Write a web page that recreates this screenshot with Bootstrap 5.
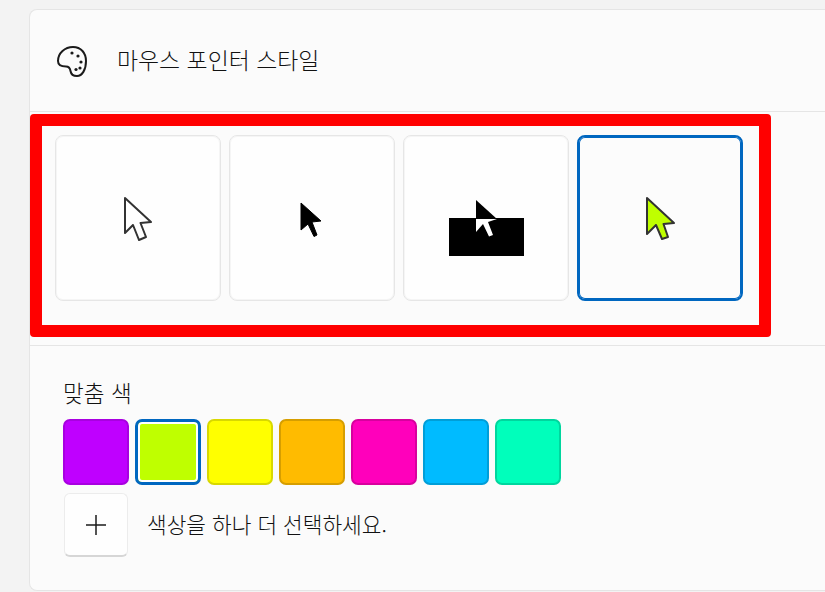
<!DOCTYPE html>
<html lang="ko">
<head>
<meta charset="utf-8">
<title>마우스 포인터 스타일</title>
<link href="https://cdn.jsdelivr.net/npm/bootstrap@5.3.0/dist/css/bootstrap.min.css" rel="stylesheet">
<style>
html,body{height:100%;overflow:hidden}
body{background:#f3f3f3;font-family:"Noto Sans CJK KR","Liberation Sans",sans-serif;color:#111;font-weight:300}
.sheet{margin:9px 0 0 29px;height:582px;background:#fbfbfb;border:1px solid #e5e5e5;border-right:0;border-radius:8px 0 0 8px;overflow:hidden}
.sheet-head{height:102px;padding-left:26px;gap:29px;border-bottom:1px solid #e5e5e5;font-size:22.900px}
.head-title{margin-top:-2px}
.mark-frame{width:741px;height:223px;margin:2px 0 8px;border:12px solid #f00;border-radius:4px;padding:9px 0 0 13px;gap:8px}
.tile{width:166px;height:166px;background:#fefefe;border:1px solid #e6e6e6;border-radius:8px;box-shadow:inset 0 0 0 1px #f5f5f5}
.tile-on{border:2px solid #0067c0;background:#fcfcfc;box-shadow:inset 0 0 0 1px #0067c0}
.tile svg{display:block}
.custom-area{border-top:1px solid #e5e5e5;padding:34px 0 0 33px}
.custom-label{font-size:22.600px;line-height:26px;margin-bottom:13px}
.swatch-row{gap:6px;margin-bottom:8px}
.swatch{width:66px;height:66px;border-radius:7px;border:2px solid}
.sw-on{border:3px solid #0067c0;box-shadow:inset 0 0 0 2px #fff}
.add-row{gap:19px;padding-left:1px;font-size:21.400px}
.add-text{margin-top:-2px}
.add-btn{width:64px;height:64px;padding:0;background:#fefefe;border:1px solid #ececec;border-bottom:2px solid #d6d6d6;border-radius:6px}
</style>
</head>
<body>
<div class="card sheet">
  <div class="sheet-head d-flex align-items-center">
    <svg width="32" height="32" viewBox="0 0 32 32" fill="none">
      <path d="M2 16C2 8 9 2 17 2C25 2 30 8 30 16C30 25 26 31 21 31C17 31 15 29 14.500 26C14 23 13 21.500 10 21.500C6 21.500 2 20.500 2 16Z" stroke="#1b1b1b" stroke-width="2"/>
      <g fill="#1b1b1b"><circle cx="16" cy="8" r="1.600"/><circle cx="22" cy="11" r="1.600"/><circle cx="25" cy="17" r="1.600"/><circle cx="24" cy="23" r="1.600"/><circle cx="20" cy="24.500" r="1.600"/></g>
    </svg>
    <span class="head-title">마우스 포인터 스타일</span>
  </div>
  <div class="mark-frame d-flex">
    <div class="tile">
      <svg width="164" height="164" viewBox="0 0 164 164"><path transform="translate(0 1)" d="M69 61L95 85L84.500 86L90 100L83 103L77 88L69 96Z" fill="#fff" stroke="#333" stroke-width="2" stroke-linejoin="round"/></svg>
    </div>
    <div class="tile">
      <svg width="164" height="164" viewBox="0 0 164 164"><path transform="translate(0 1)" d="M71 66L91 84L82 85L87 98L84 99.500L78 87L71 93Z" fill="#000" stroke="#000" stroke-linejoin="round"/></svg>
    </div>
    <div class="tile">
      <svg width="164" height="164" viewBox="0 0 164 164"><g transform="translate(0 1)"><rect x="45" y="81" width="75" height="38" fill="#000"/><path d="M72 63L93 82H72Z" fill="#000"/><path d="M72 82H93L84 85L89 98L85 99.500L79 87L72 95Z" fill="#fff"/></g></svg>
    </div>
    <div class="tile tile-on">
      <svg width="162" height="162" viewBox="0 0 162 162"><path transform="translate(-1 0)" d="M69 61L96 86L85.500 87L90 100L84 102L78 88L69 97Z" fill="#bfff00" stroke="#333" stroke-width="2" stroke-linejoin="round"/></svg>
    </div>
  </div>
  <div class="custom-area">
    <div class="custom-label">맞춤 색</div>
    <div class="swatch-row d-flex">
      <div class="swatch" style="background:#bf00ff;border-color:#a800e0"></div>
      <div class="swatch sw-on" style="background:#bfff00"></div>
      <div class="swatch" style="background:#ffff00;border-color:#d8d800"></div>
      <div class="swatch" style="background:#ffbb00;border-color:#d69e00"></div>
      <div class="swatch" style="background:#ff00bb;border-color:#d8009e"></div>
      <div class="swatch" style="background:#00bbff;border-color:#009ed8"></div>
      <div class="swatch" style="background:#00ffbb;border-color:#00d69e"></div>
    </div>
    <div class="add-row d-flex align-items-center">
      <button class="btn add-btn d-flex align-items-center justify-content-center" type="button" aria-label="추가">
        <svg width="20" height="20" viewBox="0 0 20 20"><path d="M10 0V20M0 10H20" stroke="#1b1b1b" stroke-width="1.500"/></svg>
      </button>
      <span class="add-text">색상을 하나 더 선택하세요.</span>
    </div>
  </div>
</div>
<script src="https://cdn.jsdelivr.net/npm/bootstrap@5.3.0/dist/js/bootstrap.bundle.min.js"></script>
</body>
</html>
